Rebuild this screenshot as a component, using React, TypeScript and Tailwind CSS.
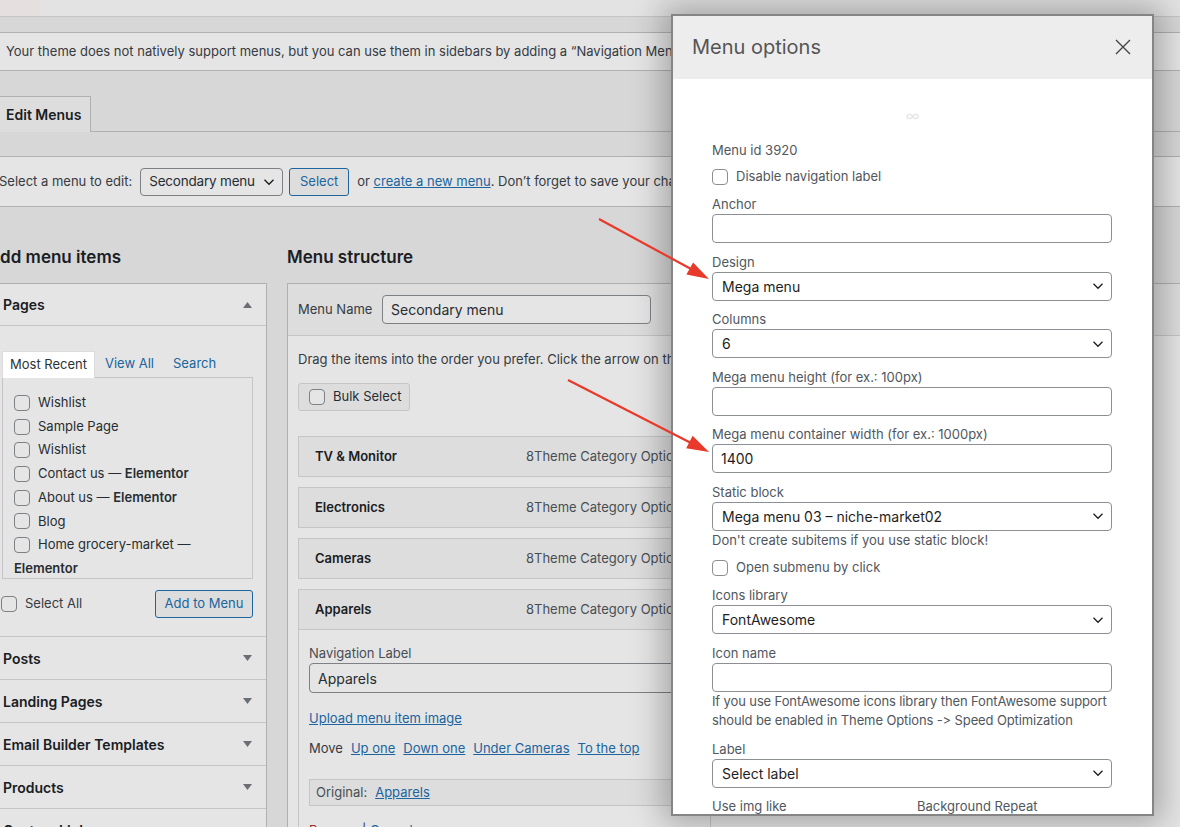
import React from "react";

function Checkbox({ className = "" }: { className?: string }) {
  return (
    <span
      className={`inline-block h-4 w-4 shrink-0 rounded-[4px] border border-[#8c8f94] bg-white ${className}`}
    />
  );
}

function Chevron() {
  return (
    <svg width="12" height="8" viewBox="0 0 12 8" fill="none">
      <path d="M1.5 1.75 6 6.25l4.5-4.5" stroke="#1e1e1e" strokeWidth="1.3" />
    </svg>
  );
}

function Caret({ up }: { up?: boolean }) {
  return (
    <svg width="9" height="6" viewBox="0 0 9 6">
      <path d={up ? "M4.5 0 9 6H0z" : "M0 0h9L4.5 6z"} fill="#787c82" />
    </svg>
  );
}

function ModalSelect({ value }: { value: string }) {
  return (
    <div className="flex h-[29px] w-[400px] items-center justify-between rounded-[4px] border border-[#8c8f94] pl-[9px] pr-[7px] text-[14px] text-[#1e1e1e]">
      <span>{value}</span>
      <Chevron />
    </div>
  );
}

function ModalInput({ value = "" }: { value?: string }) {
  return (
    <div className="flex h-[29px] w-[400px] items-center rounded-[4px] border border-[#8c8f94] pl-[8px] text-[14px] text-[#1e1e1e]">
      {value}
    </div>
  );
}

function Field({ label, children, className = "mt-[9.5px]" }: { label: string; children: React.ReactNode; className?: string }) {
  return (
    <div className={className}>
      <div className="mb-px leading-[18px]">{label}</div>
      {children}
    </div>
  );
}

const pages: { name: string; state?: string }[] = [
  { name: "Wishlist" },
  { name: "Sample Page" },
  { name: "Wishlist" },
  { name: "Contact us", state: "Elementor" },
  { name: "About us", state: "Elementor" },
  { name: "Blog" },
];

const sections = ["Posts", "Landing Pages", "Email Builder Templates", "Products", "Custom Links"];

const menuItems = ["TV & Monitor", "Electronics", "Cameras"];

export default function App() {
  return (
    <div className="relative h-[827px] w-[1180px] overflow-hidden bg-[#f0f0f1] font-[Inter,'Noto_Sans',sans-serif] text-[13px] text-[#3c434a]">
      {/* top strips */}
      <div className="flex h-[17px] border-b border-[#dcdcde] bg-[#fdfdfd]">
        <div className="w-[40px] bg-[#fff9f9]" />
      </div>
      <div className="h-[15px]" />
      <div className="flex h-[39px] items-center border-y border-[#c3c4c7] bg-white pl-[6px] whitespace-nowrap">
        Your theme does not natively support menus, but you can use them in sidebars by adding a “Navigation Menu” widget on the Widgets screen.
      </div>

      {/* tabs */}
      <div className="mt-[25px] flex h-[36px] items-end border-b border-[#c3c4c7]">
        <div className="-mb-px flex h-[36px] w-[91px] items-center border-r border-t border-[#c3c4c7] bg-[#f6f7f7] pl-[6px] text-[14px] font-semibold text-[#1d2327]">
          Edit Menus
        </div>
      </div>

      {/* select bar */}
      <div className="mt-[24px] flex h-[51px] items-center border-y border-[#c3c4c7] bg-white whitespace-nowrap">
        <span className="-ml-px">Select a menu to edit:</span>
        <div className="ml-[8px] flex h-[28px] w-[143px] items-center justify-between rounded-[4px] border border-[#8c8f94] bg-white pl-[8px] pr-[7px] text-[13.5px] tracking-[-0.2px] text-[#2c3338]">
          <span>Secondary menu</span>
          <Chevron />
        </div>
        <div className="ml-[6px] flex h-[28px] w-[60px] items-center justify-center rounded-[3px] border border-[#2271b1] bg-[#f6f7f7] text-[#2271b1]">
          Select
        </div>
        <span className="ml-[8px]">
          or <span className="text-[#2271b1] underline">create a new menu</span>. Don’t forget to save your changes!
        </span>
      </div>

      {/* columns */}
      <div className="ml-[-12px] flex gap-[20px]">
        {/* left column */}
        <div className="w-[279px] shrink-0">
          <h2 className="mt-[38px] text-[17px] font-semibold leading-[24px] text-[#1d2327]">Add menu items</h2>
          <div className="mt-[14px] border-x border-t border-[#c3c4c7] bg-white">
            <div className="flex h-[42px] items-center justify-between border-b border-[#dcdcde] pl-[14px] pr-[14px] text-[14px] font-semibold text-[#1d2327]">
              Pages
              <Caret up />
            </div>
            <div className="border-b border-[#dcdcde] pb-[18px] pl-[13px] pt-[25px]">
              <div className="flex h-[26px] items-end">
                <div className="relative z-10 -mb-px flex h-[27px] w-[93px] items-center justify-center border-x border-t border-[#dcdcde] bg-white text-[#2c3338]">
                  Most Recent
                </div>
                <span className="ml-[10px] self-center text-[#2271b1]">View All</span>
                <span className="ml-[19px] self-center text-[#2271b1]">Search</span>
              </div>
              <div className="h-[202px] w-[251px] overflow-hidden border border-[#dcdcde] pl-[11px] pt-[13px] leading-[23.7px] text-[#2c3338]">
                {pages.map((p, i) => (
                  <div key={i} className="flex items-center gap-[8px]">
                    <Checkbox />
                    <span>
                      {p.name}
                      {p.state && (
                        <>
                          {" — "}
                          <span className="font-semibold">{p.state}</span>
                        </>
                      )}
                    </span>
                  </div>
                ))}
                <div className="flex items-center gap-[8px]">
                  <Checkbox />
                  <span>Home grocery-market —</span>
                </div>
                <div className="font-semibold">Elementor</div>
              </div>
              <div className="mt-[11px] flex w-[251px] items-center justify-between">
                <div className="-ml-px flex items-center gap-[8px]">
                  <Checkbox />
                  <span>Select All</span>
                </div>
                <div className="flex h-[28px] w-[98px] items-center justify-center rounded-[3px] border border-[#2271b1] bg-[#f6f7f7] text-[#2271b1]">
                  Add to Menu
                </div>
              </div>
            </div>
            {sections.map((s) => (
              <div
                key={s}
                className="flex h-[43px] items-center justify-between border-b border-[#dcdcde] pl-[14px] pr-[14px] text-[14px] font-semibold text-[#1d2327]"
              >
                {s}
                <Caret />
              </div>
            ))}
          </div>
        </div>

        {/* menu structure */}
        <div className="min-w-0 flex-1">
          <h2 className="mt-[38px] text-[17px] font-semibold leading-[24px] text-[#1d2327]">Menu structure</h2>
          <div className="mt-[14px] w-[1000px] border border-[#c3c4c7] bg-white">
            <div className="flex h-[52px] items-center border-b border-[#dcdcde] bg-[#f6f7f7] pl-[10px]">
              <span className="w-[84px]">Menu Name</span>
              <div className="flex h-[29px] w-[269px] items-center rounded-[4px] border border-[#8c8f94] bg-white pl-[8px] text-[14px] text-[#2c3338]">
                Secondary menu
              </div>
            </div>
            <div className="pl-[10px] pt-[14px]">
              <div className="whitespace-nowrap leading-[18px]">
                Drag the items into the order you prefer. Click the arrow on the right of the item to reveal additional configuration options.
              </div>
              <div className="mt-[15px] flex h-[28px] w-[112px] items-center gap-[8px] rounded-[3px] border border-[#dcdcde] bg-[#f6f7f7] pl-[10px] text-[#2c3338]">
                <Checkbox />
                Bulk Select
              </div>
              <div className="mt-[25px] w-[413px]">
                {menuItems.map((m) => (
                  <div
                    key={m}
                    className="mb-[10px] flex h-[41px] items-center border border-[#dcdcde] bg-[#f6f7f7] pl-[16px] whitespace-nowrap"
                  >
                    <span className="w-[211px] font-semibold text-[#1d2327]">{m}</span>
                    <span className="text-[#50575e]">8Theme Category Options</span>
                  </div>
                ))}
                <div className="flex h-[41px] items-center border border-[#dcdcde] bg-[#f6f7f7] pl-[16px] whitespace-nowrap">
                  <span className="w-[211px] font-semibold text-[#1d2327]">Apparels</span>
                  <span className="text-[#50575e]">8Theme Category Options</span>
                </div>
                <div className="border-x border-b border-[#dcdcde] bg-white pl-[10px] pt-[14px]">
                  <div className="leading-[18px] text-[#50575e]">Navigation Label</div>
                  <div className="mt-px flex h-[30px] w-[391px] items-center rounded-[4px] border border-[#8c8f94] bg-white pl-[8px] text-[14px] text-[#2c3338]">
                    Apparels
                  </div>
                  <div className="mt-[16px] leading-[18px] text-[#2271b1] underline">Upload menu item image</div>
                  <div className="mt-[12px] flex gap-[8px] leading-[18px]">
                    <span>Move</span>
                    <span className="text-[#2271b1] underline">Up one</span>
                    <span className="text-[#2271b1] underline">Down one</span>
                    <span className="text-[#2271b1] underline">Under Cameras</span>
                    <span className="text-[#2271b1] underline">To the top</span>
                  </div>
                  <div className="mt-[22px] flex h-[27px] w-[391px] items-center gap-[8px] border border-[#dcdcde] bg-[#f6f7f7] pl-[6px] text-[#50575e]">
                    Original:
                    <span className="text-[#2271b1] underline">Apparels</span>
                  </div>
                  <div className="mt-[15px] leading-[18px]">
                    <span className="text-[#b32d2e] underline">Remove</span> |{" "}
                    <span className="text-[#2271b1] underline">Cancel</span>
                  </div>
                  <div className="h-[30px]" />
                </div>
              </div>
            </div>
          </div>
        </div>
      </div>

      {/* overlay */}
      <div className="absolute inset-0 bg-black/10" />

      {/* modal */}
      <div className="absolute left-[671px] top-[14px] h-[802px] w-[483px] overflow-hidden border-2 border-[#858585] bg-white shadow-[0_0_30px_8px_rgba(0,0,0,0.28)]">
        <div className="flex h-[63px] items-center justify-between bg-[#ededed] pb-[2px] pl-[19px] pr-[21px]">
          <span className="text-[20px] text-[#555]">Menu options</span>
          <svg width="16" height="16" viewBox="0 0 16 16" fill="none">
            <path d="M1 1l14 14M15 1 1 15" stroke="#444" strokeWidth="1.4" />
          </svg>
        </div>
        <div className="pl-[39px] text-[13px] text-[#50575e]">
          <div className="h-[62px] pt-[28px] pr-[39px] text-center text-[15px] leading-[18px] text-[#e6e6e6]">∞</div>
          <div className="leading-[18px]">Menu id 3920</div>
          <div className="mt-[9px] flex h-[18px] items-center gap-[8px]">
            <Checkbox />
            Disable navigation label
          </div>
          <Field label="Anchor" className="mt-[9px]">
            <ModalInput />
          </Field>
          <Field label="Design">
            <ModalSelect value="Mega menu" />
          </Field>
          <Field label="Columns">
            <ModalSelect value="6" />
          </Field>
          <Field label="Mega menu height (for ex.: 100px)">
            <ModalInput />
          </Field>
          <Field label="Mega menu container width (for ex.: 1000px)">
            <ModalInput value="1400" />
          </Field>
          <Field label="Static block">
            <ModalSelect value="Mega menu 03 – niche-market02" />
          </Field>
          <div className="leading-[18px]">Don't create subitems if you use static block!</div>
          <div className="mt-[10px] flex h-[18px] items-center gap-[8px]">
            <Checkbox />
            Open submenu by click
          </div>
          <Field label="Icons library">
            <ModalSelect value="FontAwesome" />
          </Field>
          <Field label="Icon name">
            <ModalInput />
          </Field>
          <div className="w-[412px] whitespace-nowrap text-[13px] leading-[19px] tracking-[-0.12px] [font-feature-settings:'calt'_0]">
            If you use FontAwesome icons library then FontAwesome support
            <br />
            should be enabled in Theme Options -&gt; Speed Optimization
          </div>
          <Field label="Label" className="mt-[10px]">
            <ModalSelect value="Select label" />
          </Field>
          <div className="mt-[9.5px] grid w-[400px] grid-cols-[205px_1fr] leading-[18px]">
            <span>Use img like</span>
            <span>Background Repeat</span>
          </div>
        </div>
      </div>

      {/* annotation arrows */}
      <svg className="pointer-events-none absolute inset-0" width="1180" height="827" viewBox="0 0 1180 827">
        <line x1="599" y1="219" x2="691" y2="269" stroke="#e8392b" strokeWidth="2.2" />
        <polygon points="709,279 686.4,274.6 693.1,262.4" fill="#e8392b" />
        <line x1="568" y1="380" x2="691" y2="443" stroke="#e8392b" strokeWidth="2.2" />
        <polygon points="709,452 686.2,448.2 692.6,435.8" fill="#e8392b" />
      </svg>
    </div>
  );
}
